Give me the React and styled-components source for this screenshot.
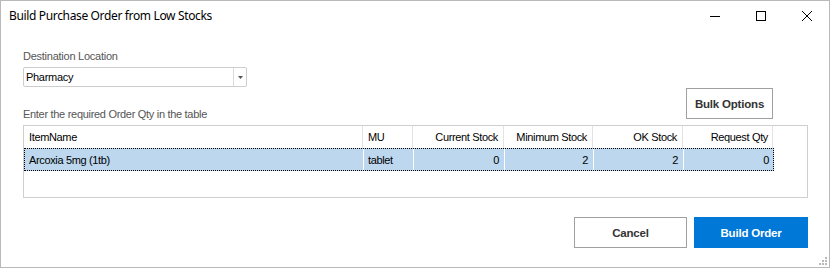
import React from "react";
import styled, { createGlobalStyle } from "styled-components";

const GlobalStyle = createGlobalStyle`
  html, body {
    margin: 0;
    padding: 0;
    background: #ffffff;
  }
  * {
    box-sizing: border-box;
  }
`;

const Window = styled.div`
  position: relative;
  width: 830px;
  height: 268px;
  border: 1px solid #b9b9b9;
  background: #ffffff;
  display: flex;
  flex-direction: column;
  font-family: "Liberation Sans", Arial, sans-serif;
  font-size: 11px;
  color: #000;
`;

const TitleBar = styled.div`
  height: 29px;
  display: flex;
  align-items: center;
  padding-left: 8px;
`;

const Title = styled.div`
  flex: 1;
  font-family: "Noto Sans", "Open Sans", sans-serif;
  font-size: 12px;
  color: #000;
  letter-spacing: -0.35px;
`;

const Controls = styled.div`
  display: flex;
  height: 100%;
  margin-right: -1px;
`;

const ControlButton = styled.div`
  width: 46px;
  height: 100%;
  display: flex;
  align-items: center;
  justify-content: center;
`;

const Content = styled.div`
  flex: 1;
  display: flex;
  flex-direction: column;
  padding: 20px 21px 0 22px;
`;

const Label = styled.div`
  line-height: 13px;
  color: #555;
  letter-spacing: -0.25px;
`;

const Combo = styled.div`
  margin-top: 4px;
  width: 224px;
  height: 20px;
  border: 1px solid #cdcdcd;
  border-radius: 2px;
  display: flex;
  align-items: stretch;
`;

const ComboText = styled.div`
  flex: 1;
  padding-left: 2px;
  display: flex;
  align-items: center;
  letter-spacing: -0.3px;
`;

const ComboArrow = styled.div`
  width: 13px;
  border-left: 1px solid #dadada;
  display: flex;
  align-items: center;
  justify-content: center;
`;

const TableHeadRow = styled.div`
  margin-top: 1px;
  display: flex;
  align-items: flex-end;
  justify-content: space-between;
`;

const Hint = styled.div`
  line-height: 13px;
  color: #555;
  letter-spacing: -0.3px;
`;

const Button = styled.button`
  height: 31px;
  width: ${(p) => p.$w}px;
  border: 1px solid ${(p) => (p.$primary ? "#0078d7" : "#a0a0a0")};
  background: ${(p) => (p.$primary ? "#0078d7" : "#ffffff")};
  color: ${(p) => (p.$primary ? "#ffffff" : "#333333")};
  font-family: "Liberation Sans", Arial, sans-serif;
  font-weight: bold;
  font-size: 11.5px;
  letter-spacing: -0.2px;
  padding: 0;
  margin: 0;
`;

const BulkButton = styled(Button)`
  margin-right: 35px;
  margin-bottom: 2px;
`;

const Grid = styled.div`
  margin-top: 4px;
  height: 73px;
  border: 1px solid #cfcfcf;
  background: #fff;
`;

const COLS = "339px 50px 91px 89px 90px 90px";

const HeaderRow = styled.div`
  display: grid;
  grid-template-columns: ${COLS};
  width: 749px;
  height: 22px;
  border-right: 1px solid #e3e3e3;
`;

const HeadCell = styled.div`
  display: flex;
  align-items: center;
  justify-content: ${(p) => (p.$right ? "flex-end" : "flex-start")};
  padding: 0 5px 0 5px;
  border-right: 1px solid #e3e3e3;
  letter-spacing: -0.35px;
  &:last-child {
    border-right: none;
  }
`;

const DataRow = styled.div`
  display: grid;
  grid-template-columns: ${COLS};
  width: 750px;
  height: 23px;
  background: #bcd7ee;
  border: 1px dotted #000;
`;

const Cell = styled.div`
  display: flex;
  align-items: center;
  justify-content: ${(p) => (p.$right ? "flex-end" : "flex-start")};
  padding: 0 5px 0 4px;
  border-right: 1px solid #ffffff;
  letter-spacing: -0.35px;
  &:last-child {
    border-right: none;
  }
`;

const Footer = styled.div`
  margin-top: 19px;
  display: flex;
  justify-content: flex-end;
  gap: 7px;
`;

const Grip = styled.svg`
  position: absolute;
  right: 1px;
  bottom: 1px;
`;

const columns = [
  { name: "ItemName" },
  { name: "MU" },
  { name: "Current Stock", right: true },
  { name: "Minimum Stock", right: true },
  { name: "OK Stock", right: true },
  { name: "Request Qty", right: true },
];

const rows = [["Arcoxia 5mg (1tb)", "tablet", "0", "2", "2", "0"]];

export default function App() {
  return (
    <>
      <GlobalStyle />
      <Window>
        <TitleBar>
          <Title>Build Purchase Order from Low Stocks</Title>
          <Controls>
            <ControlButton>
              <svg width="10" height="10" viewBox="0 0 10 10">
                <rect x="0" y="5" width="10" height="1" fill="#000" />
              </svg>
            </ControlButton>
            <ControlButton>
              <svg width="10" height="10" viewBox="0 0 10 10">
                <rect x="0.5" y="0.5" width="9" height="9" fill="none" stroke="#000" />
              </svg>
            </ControlButton>
            <ControlButton>
              <svg width="10" height="10" viewBox="0 0 10 10">
                <path d="M0 0 L10 10 M10 0 L0 10" stroke="#000" strokeWidth="1" />
              </svg>
            </ControlButton>
          </Controls>
        </TitleBar>
        <Content>
          <Label>Destination Location</Label>
          <Combo>
            <ComboText>Pharmacy</ComboText>
            <ComboArrow>
              <svg width="5" height="3" viewBox="0 0 5 3">
                <path d="M0 0 H5 L2.5 3 Z" fill="#555" />
              </svg>
            </ComboArrow>
          </Combo>
          <TableHeadRow>
            <Hint>Enter the required Order Qty in the table</Hint>
            <BulkButton $w={87}>Bulk Options</BulkButton>
          </TableHeadRow>
          <Grid>
            <HeaderRow>
              {columns.map((c) => (
                <HeadCell key={c.name} $right={c.right}>
                  {c.name}
                </HeadCell>
              ))}
            </HeaderRow>
            {rows.map((r, i) => (
              <DataRow key={i}>
                {r.map((v, j) => (
                  <Cell key={j} $right={columns[j].right}>
                    {v}
                  </Cell>
                ))}
              </DataRow>
            ))}
          </Grid>
          <Footer>
            <Button $w={113}>Cancel</Button>
            <Button $w={114} $primary>
              Build Order
            </Button>
          </Footer>
        </Content>
        <Grip width="10" height="10" viewBox="0 0 10 10">
          <rect x="7" y="1" width="2" height="2" fill="#b8b8b8" />
          <rect x="4" y="4" width="2" height="2" fill="#b8b8b8" />
          <rect x="7" y="4" width="2" height="2" fill="#b8b8b8" />
          <rect x="1" y="7" width="2" height="2" fill="#b8b8b8" />
          <rect x="4" y="7" width="2" height="2" fill="#b8b8b8" />
          <rect x="7" y="7" width="2" height="2" fill="#b8b8b8" />
        </Grip>
      </Window>
    </>
  );
}
